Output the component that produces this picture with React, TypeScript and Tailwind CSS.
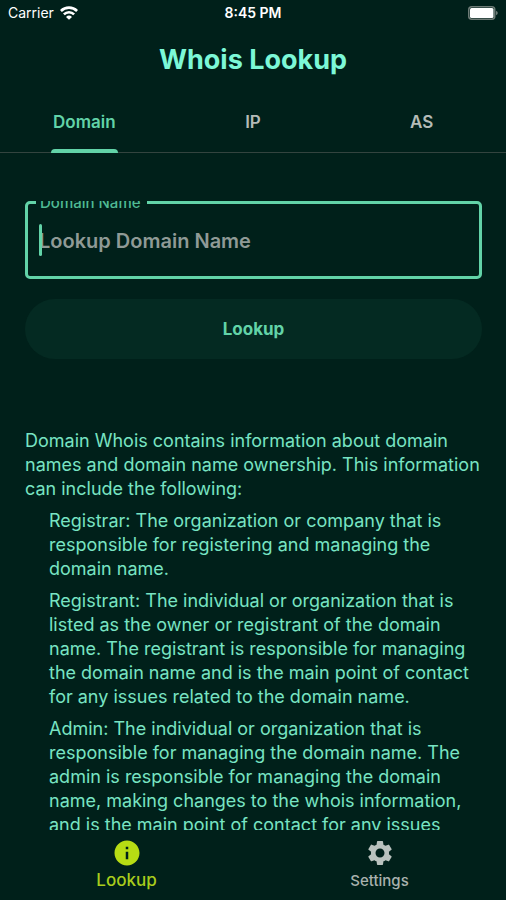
import { useState } from "react";
import { MdInfo, MdSettings } from "react-icons/md";

const TABS = ["Domain", "IP", "AS"];

const ENTRIES = [
  "Registrar: The organization or company that is responsible for registering and managing the domain name.",
  "Registrant: The individual or organization that is listed as the owner or registrant of the domain name. The registrant is responsible for managing the domain name and is the main point of contact for any issues related to the domain name.",
  "Admin: The individual or organization that is responsible for managing the domain name. The admin is responsible for managing the domain name, making changes to the whois information, and is the main point of contact for any issues related to the domain name.",
];

function WifiIcon() {
  return (
    <svg viewBox="0 0 18 14" className="h-[14px] w-[18px]" fill="none" stroke="currentColor" strokeWidth="2.6">
      <path d="M0.9 5 A11.4 11.4 0 0 1 17.1 5" />
      <path d="M3.9 8.4 A7.2 7.2 0 0 1 14.1 8.4" />
      <path d="M9 13.8 L6 10.9 A4.3 4.3 0 0 1 12 10.9 Z" fill="currentColor" stroke="none" />
    </svg>
  );
}

function BatteryIcon() {
  return (
    <svg viewBox="0 0 30 14" className="h-[14px] w-[30px]">
      <rect x="0.75" y="0.75" width="26" height="12.5" rx="3" fill="none" stroke="#6d7b76" strokeWidth="1.5" />
      <rect x="2" y="2" width="23.5" height="10" rx="1.5" fill="#fff" />
      <path d="M28 4.8 Q29.8 5.6 29.8 7 Q29.8 8.4 28 9.2 Z" fill="#6d7b76" />
    </svg>
  );
}

function StatusBar() {
  return (
    <div className="grid h-[26px] grid-cols-3 items-center px-2 text-sm text-white">
      <div className="flex items-center gap-1.5">
        <span>Carrier</span>
        <WifiIcon />
      </div>
      <span className="text-center font-semibold">8:45 PM</span>
      <div className="flex justify-end">
        <BatteryIcon />
      </div>
    </div>
  );
}

export default function App() {
  const [tab, setTab] = useState("Domain");
  const [query, setQuery] = useState("");

  return (
    <div className="flex h-screen flex-col bg-[#00201a] font-['Inter',sans-serif]">
      <StatusBar />
      <h1 className="h-[66px] text-center text-[27px] leading-[68px] font-bold text-[#7cf8d7]">Whois Lookup</h1>

      <div role="tablist" className="grid h-[61px] shrink-0 grid-cols-3 border-b border-[#33443f]">
        {TABS.map((t) => (
          <button
            key={t}
            role="tab"
            aria-selected={tab === t}
            onClick={() => setTab(t)}
            className={`flex justify-center text-[17px] font-semibold ${tab === t ? "text-[#62d3a8]" : "text-[#b4bbb7]"}`}
          >
            <span className="relative flex h-[61px] items-center px-0.5">
              {t}
              {tab === t && <span className="absolute inset-x-0 bottom-0 h-1 rounded-t-full bg-[#62d3a8]" />}
            </span>
          </button>
        ))}
      </div>

      <main className="min-h-0 flex-1 overflow-y-auto pt-12 pr-6 pl-[25px] [scrollbar-width:none]">
        <form onSubmit={(e) => e.preventDefault()}>
          <div className="relative rounded-[5px] border-3 border-[#62d3a8]">
            <label
              htmlFor="domain"
              className="absolute -top-[3px] left-2 flex h-[10px] items-end overflow-hidden bg-[#00201a] pr-1.5 pl-1 text-[15px] leading-4 font-medium text-[#4fba94]"
            >
              Domain Name
            </label>
            {!query && <span className="absolute top-5 left-[11px] h-8 w-[3px] rounded-full bg-[#62d3a8]" />}
            <input
              id="domain"
              value={query}
              onChange={(e) => setQuery(e.target.value)}
              placeholder="Lookup Domain Name"
              className="h-[72px] w-full bg-transparent px-[11px] pt-0.5 text-xl font-semibold text-[#62d3a8] outline-none placeholder:text-[#8f9a96]"
            />
          </div>
          <button className="mt-5 h-[60px] w-full rounded-full bg-[#042a22] pt-0.5 text-[17px] font-bold text-[#62d3a8]">
            Lookup
          </button>
        </form>

        <div className="mt-[70px] flex flex-col gap-2 text-lg leading-6 text-[#78e4c3]">
          <p>
            Domain Whois contains information about domain names and domain name ownership. This information can
            include the following:
          </p>
          {ENTRIES.map((text) => (
            <p key={text} className="pl-6">
              {text}
            </p>
          ))}
        </div>
      </main>

      <nav className="grid h-[70px] shrink-0 grid-cols-2">
        <a href="#lookup" className="flex flex-col items-center pt-2 text-[17px] leading-6 font-medium text-[#a9cc1c]">
          <MdInfo className="size-[30px] text-[#b7dc14]" />
          Lookup
        </a>
        <a href="#settings" className="flex flex-col items-center pt-2 text-[15px] leading-[26px] font-medium text-[#a9b1ad]">
          <MdSettings className="size-[30px] text-[#b9c2be]" />
          Settings
        </a>
      </nav>
    </div>
  );
}
